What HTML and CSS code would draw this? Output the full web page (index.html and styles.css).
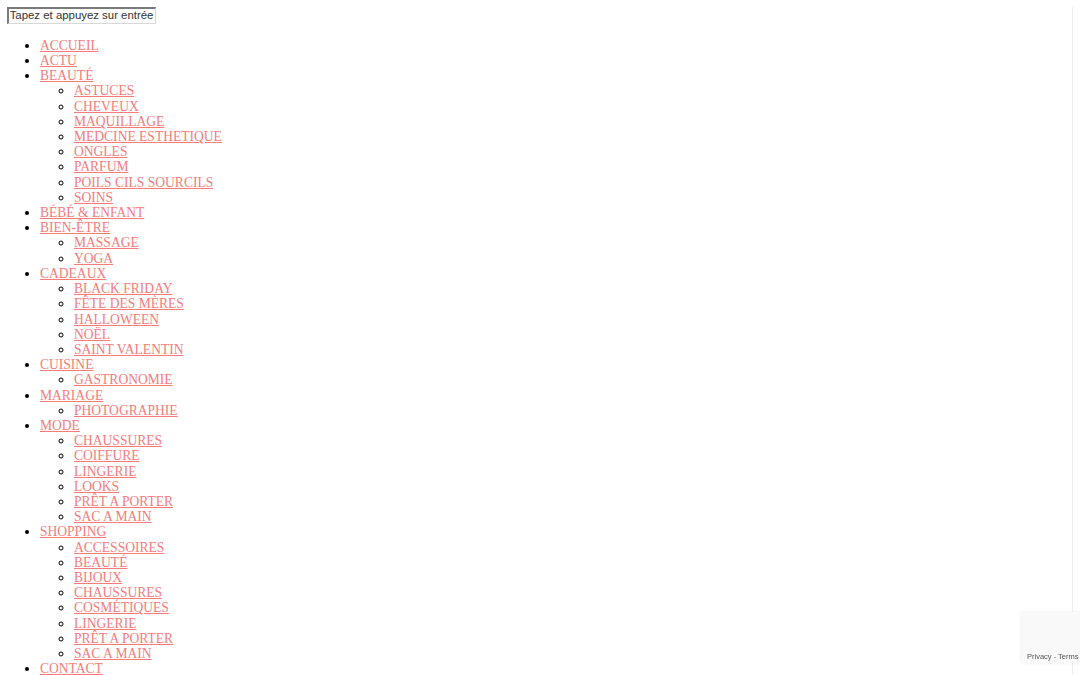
FILE: index.html
```html
<!DOCTYPE html>
<html lang="fr">
<head>
<meta charset="utf-8">
<title>Menu</title>
<link rel="stylesheet" href="styles.css">
</head>
<body>
<form class="search"><input class="search-input" type="text" value="Tapez et appuyez sur entrée"></form>
<ul class="menu">
  <li><a href="#">ACCUEIL</a></li>
  <li><a href="#">ACTU</a></li>
  <li><a href="#">BEAUTÉ</a>
    <ul class="sub">
      <li><a href="#">ASTUCES</a></li>
      <li><a href="#">CHEVEUX</a></li>
      <li><a href="#">MAQUILLAGE</a></li>
      <li><a href="#">MEDCINE ESTHETIQUE</a></li>
      <li><a href="#">ONGLES</a></li>
      <li><a href="#">PARFUM</a></li>
      <li><a href="#">POILS CILS SOURCILS</a></li>
      <li><a href="#">SOINS</a></li>
    </ul>
  </li>
  <li><a href="#">BÉBÉ &amp; ENFANT</a></li>
  <li><a href="#">BIEN-ÊTRE</a>
    <ul class="sub">
      <li><a href="#">MASSAGE</a></li>
      <li><a href="#">YOGA</a></li>
    </ul>
  </li>
  <li><a href="#">CADEAUX</a>
    <ul class="sub">
      <li><a href="#">BLACK FRIDAY</a></li>
      <li><a href="#">FÊTE DES MÈRES</a></li>
      <li><a href="#">HALLOWEEN</a></li>
      <li><a href="#">NOËL</a></li>
      <li><a href="#">SAINT VALENTIN</a></li>
    </ul>
  </li>
  <li><a href="#">CUISINE</a>
    <ul class="sub">
      <li><a href="#">GASTRONOMIE</a></li>
    </ul>
  </li>
  <li><a href="#">MARIAGE</a>
    <ul class="sub">
      <li><a href="#">PHOTOGRAPHIE</a></li>
    </ul>
  </li>
  <li><a href="#">MODE</a>
    <ul class="sub">
      <li><a href="#">CHAUSSURES</a></li>
      <li><a href="#">COIFFURE</a></li>
      <li><a href="#">LINGERIE</a></li>
      <li><a href="#">LOOKS</a></li>
      <li><a href="#">PRÊT A PORTER</a></li>
      <li><a href="#">SAC A MAIN</a></li>
    </ul>
  </li>
  <li><a href="#">SHOPPING</a>
    <ul class="sub">
      <li><a href="#">ACCESSOIRES</a></li>
      <li><a href="#">BEAUTÉ</a></li>
      <li><a href="#">BIJOUX</a></li>
      <li><a href="#">CHAUSSURES</a></li>
      <li><a href="#">COSMÉTIQUES</a></li>
      <li><a href="#">LINGERIE</a></li>
      <li><a href="#">PRÊT A PORTER</a></li>
      <li><a href="#">SAC A MAIN</a></li>
    </ul>
  </li>
  <li><a href="#">CONTACT</a></li>
</ul>
<div class="edge-line"></div>
<div class="recaptcha"><span class="recaptcha-links">Privacy - Terms</span></div>
</body>
</html>
```
FILE: styles.css
```css
html, body {
  background: #fff;
}
body {
  margin: 6.67px;
  font-family: "Liberation Serif", "Times New Roman", serif;
  font-size: 13.55px;
  line-height: 15.2px;
  color: #000;
}
.search {
  margin: 0;
  display: flex;
}
.search-input {
  box-sizing: border-box;
  width: 149px;
  height: 17px;
  margin: 0;
  padding: 0 1px 1px;
  border-top: 2px solid #7a7a7a;
  border-left: 2px solid #7a7a7a;
  border-right: 1px solid #d8d8d8;
  border-bottom: 1px solid #d8d8d8;
  font-family: "Liberation Sans", Arial, sans-serif;
  font-size: 11.4px;
  color: #333;
  background: #fff;
  outline: none;
}
.menu {
  margin: 14.2px 0 13.33px;
  padding-left: 33.33px;
  list-style: disc;
}
.sub {
  margin: 0;
  padding-left: 34px;
  list-style: circle;
}
.menu a {
  color: #f77b7b;
  text-decoration: underline;
}
.edge-line {
  position: fixed;
  top: 7px;
  bottom: 0;
  left: 1072px;
  width: 1px;
  background: #efefef;
}
.recaptcha {
  position: fixed;
  left: 1021px;
  top: 612px;
  width: 70px;
  height: 51px;
  background: #f9f9f9;
  box-shadow: 0 0 3px rgba(0,0,0,0.08);
  font-family: "Liberation Sans", Arial, sans-serif;
}
.recaptcha-links {
  position: absolute;
  left: 6px;
  top: 40px;
  font-size: 7.5px;
  line-height: 9px;
  color: #555;
  white-space: nowrap;
}
```
